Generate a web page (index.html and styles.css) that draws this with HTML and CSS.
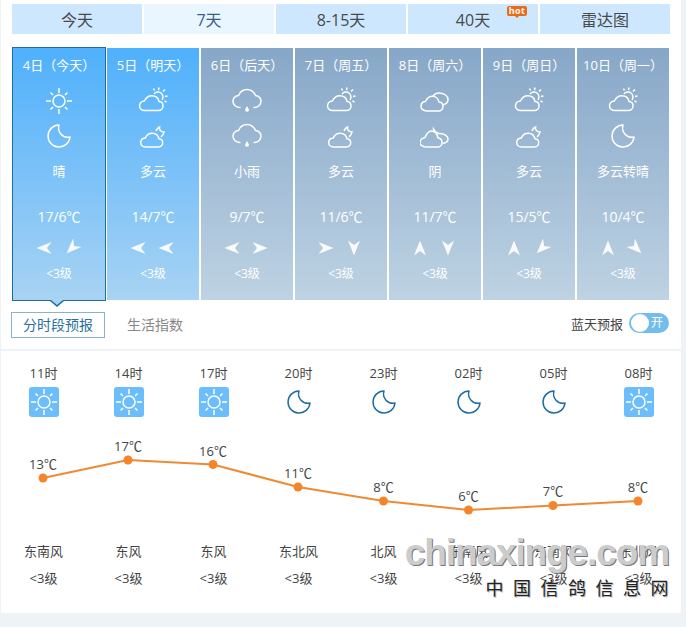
FILE: index.html
```html
<!DOCTYPE html>
<html lang="zh-CN">
<head>
  <meta charset="UTF-8">
  <title>7天天气预报</title>
  <link rel="stylesheet" href="styles.css">
</head>
<body>
  <svg class="icon-defs" width="0" height="0">
    <defs>
      <symbol id="sun" viewBox="0 0 30 30">
        <circle cx="15" cy="15" r="6"/>
        <path d="M15 2v5M15 23v5M2 15h5M23 15h5M6.500 6.500l2.500 2.500M21 21l2.500 2.500M6.500 23.500l2.500-2.500M21 9l2.500-2.500"/>
      </symbol>
      <symbol id="moon" viewBox="0 0 30 30">
        <path d="M15 4A11 11 0 1 0 26 16A9.400 9.400 0 0 1 15 4Z" stroke-linejoin="round"/>
      </symbol>
      <symbol id="cloud-sun" viewBox="0 0 30 30">
        <path d="M6.500 24.500h14c2.500 0 4.500-2 4.500-4.500 0-2.300-1.700-4.200-3.900-4.400-.8-3.400-3.800-5.800-7.200-5.800-3.300 0-6.200 2.300-7.500 5.200C3.500 15.200 1.500 17.500 1.500 20c0 2.500 2.300 4.500 5 4.500Z"/>
        <path d="M16 8A5 5 0 0 1 24 14"/>
        <path d="M21 1.500l-.5 2.500M27 3.500l-2 2M29.500 10l-2.500 .5M28.500 16l-2-1M15.500 2.500l1 2"/>
      </symbol>
      <symbol id="cloud-moon" viewBox="0 0 30 30">
        <path d="M7.500 26h13c2.300 0 4.200-1.900 4.200-4.200 0-2.200-1.600-3.900-3.700-4.100-.8-3.200-3.600-5.500-6.800-5.500-3.100 0-5.800 2.100-7 4.900C4.500 17.300 2.700 19.400 2.700 21.800c0 2.300 2.100 4.200 4.800 4.200Z"/>
        <path d="M18 10c.8-2 2.200-3.500 3.500-4-.5 2.500 1.300 5 4.500 5-.3 2-1.500 3.800-3 5"/>
      </symbol>
      <symbol id="rain" viewBox="0 0 30 30">
        <path d="M8.500 21.500C4 21.500 1 18.800 1 15.300 1 12 3.500 10 6.500 9.500 8 6 11 3.500 15 3.500S22 6 23.500 9.500C26.500 10 29 12 29 15.300 29 18.800 26 21.500 21.500 21.500"/>
        <path class="fill" d="M15 20l2 3.800a2 2 0 1 1-4 0Z"/>
      </symbol>
      <symbol id="overcast" viewBox="0 0 30 30">
        <path d="M6.500 25h12c2.500 0 4.500-2 4.500-4.500 0-2.300-1.700-4.200-3.900-4.400-.8-3.400-3.800-5.800-6.700-5.800-3.300 0-5.700 2.300-7 5.200C2.500 15.700 1 18 1 20.500c0 2.500 2.800 4.500 5.500 4.500Z"/>
        <path d="M13 10.300c1-1.800 3-3.300 6-3.300 4.500 0 9 2.500 9 6.500 0 3-2.300 4.800-5.500 5.500"/>
      </symbol>
      <symbol id="overcast-night" viewBox="0 0 30 30">
        <path d="M5.500 26h12c2.500 0 4.500-2 4.500-4.500 0-2.300-1.700-4.200-3.900-4.400-.8-3.900-3.300-7.100-6.700-7.100-3.300 0-5.200 3.600-6.500 6.500C2 17.200 0 19 0 21.500 0 24 2.800 26 5.500 26Z"/>
        <path d="M17.500 12.500c4.500-.5 10.500 1.500 10.500 5.500 0 2.500-2.300 4-5.500 4.500"/>
        <path class="fill" d="M13 5c.5 3 3 5.500 6 7-2.500 1-7.500-.5-6-7Z"/>
      </symbol>
      <symbol id="wind" viewBox="0 0 16 16">
        <path d="M.5 8 15.500 2 11 8 15.500 14Z"/>
      </symbol>
    </defs>
  </svg>

  <main class="panel">
    <nav class="tabs">
      <a class="tab">今天</a>
      <a class="tab tab-current">7天</a>
      <a class="tab">8-15天</a>
      <a class="tab">40天<span class="hot">hot</span></a>
      <a class="tab">雷达图</a>
    </nav>

    <ul class="days">
      <li class="day day-active">
        <h3>4日（今天）</h3>
        <svg class="wx"><use href="#sun"/></svg>
        <svg class="wx"><use href="#moon"/></svg>
        <p class="desc">晴</p>
        <p class="temp">17/6℃</p>
        <div class="winds"><svg style="transform:rotate(0deg)"><use href="#wind"/></svg><svg style="transform:rotate(-45deg)"><use href="#wind"/></svg></div>
        <p class="lvl">&lt;3级</p>
      </li>
      <li class="day day-near">
        <h3>5日（明天）</h3>
        <svg class="wx"><use href="#cloud-sun"/></svg>
        <svg class="wx"><use href="#cloud-moon"/></svg>
        <p class="desc">多云</p>
        <p class="temp">14/7℃</p>
        <div class="winds"><svg style="transform:rotate(0deg)"><use href="#wind"/></svg><svg style="transform:rotate(0deg)"><use href="#wind"/></svg></div>
        <p class="lvl">&lt;3级</p>
      </li>
      <li class="day">
        <h3>6日（后天）</h3>
        <svg class="wx"><use href="#rain"/></svg>
        <svg class="wx"><use href="#rain"/></svg>
        <p class="desc">小雨</p>
        <p class="temp">9/7℃</p>
        <div class="winds"><svg style="transform:rotate(0deg)"><use href="#wind"/></svg><svg style="transform:rotate(180deg)"><use href="#wind"/></svg></div>
        <p class="lvl">&lt;3级</p>
      </li>
      <li class="day">
        <h3>7日（周五）</h3>
        <svg class="wx"><use href="#cloud-sun"/></svg>
        <svg class="wx"><use href="#cloud-moon"/></svg>
        <p class="desc">多云</p>
        <p class="temp">11/6℃</p>
        <div class="winds"><svg style="transform:rotate(180deg)"><use href="#wind"/></svg><svg style="transform:rotate(-90deg)"><use href="#wind"/></svg></div>
        <p class="lvl">&lt;3级</p>
      </li>
      <li class="day">
        <h3>8日（周六）</h3>
        <svg class="wx"><use href="#overcast"/></svg>
        <svg class="wx"><use href="#overcast-night"/></svg>
        <p class="desc">阴</p>
        <p class="temp">11/7℃</p>
        <div class="winds"><svg style="transform:rotate(90deg)"><use href="#wind"/></svg><svg style="transform:rotate(-90deg)"><use href="#wind"/></svg></div>
        <p class="lvl">&lt;3级</p>
      </li>
      <li class="day">
        <h3>9日（周日）</h3>
        <svg class="wx"><use href="#cloud-sun"/></svg>
        <svg class="wx"><use href="#cloud-moon"/></svg>
        <p class="desc">多云</p>
        <p class="temp">15/5℃</p>
        <div class="winds"><svg style="transform:rotate(90deg)"><use href="#wind"/></svg><svg style="transform:rotate(-45deg)"><use href="#wind"/></svg></div>
        <p class="lvl">&lt;3级</p>
      </li>
      <li class="day">
        <h3>10日（周一）</h3>
        <svg class="wx"><use href="#cloud-sun"/></svg>
        <svg class="wx"><use href="#moon"/></svg>
        <p class="desc">多云转晴</p>
        <p class="temp">10/4℃</p>
        <div class="winds"><svg style="transform:rotate(90deg)"><use href="#wind"/></svg><svg style="transform:rotate(-135deg)"><use href="#wind"/></svg></div>
        <p class="lvl">&lt;3级</p>
      </li>
    </ul>

    <div class="subbar">
      <a class="subtab subtab-on">分时段预报</a>
      <a class="subtab">生活指数</a>
      <div class="bluesky">
        <span>蓝天预报</span>
        <span class="switch"><i></i>开</span>
      </div>
    </div>

    <section class="hours">
      <ol class="hour-row">
        <li><span>11时</span><svg class="hicon hicon-day"><use href="#sun"/></svg></li>
        <li><span>14时</span><svg class="hicon hicon-day"><use href="#sun"/></svg></li>
        <li><span>17时</span><svg class="hicon hicon-day"><use href="#sun"/></svg></li>
        <li><span>20时</span><svg class="hicon hicon-night"><use href="#moon"/></svg></li>
        <li><span>23时</span><svg class="hicon hicon-night"><use href="#moon"/></svg></li>
        <li><span>02时</span><svg class="hicon hicon-night"><use href="#moon"/></svg></li>
        <li><span>05时</span><svg class="hicon hicon-night"><use href="#moon"/></svg></li>
        <li><span>08时</span><svg class="hicon hicon-day"><use href="#sun"/></svg></li>
      </ol>

      <svg class="chart" viewBox="0 0 680 100" width="680" height="100">
        <polyline points="42,60 127,42 212,46.500 297,69 382.500,83 467.500,92 552,87.500 637,83"/>
        <g class="dots">
          <circle cx="42" cy="60" r="4.500"/><circle cx="127" cy="42" r="4.500"/><circle cx="212" cy="46.500" r="4.500"/><circle cx="297" cy="69" r="4.500"/>
          <circle cx="382.500" cy="83" r="4.500"/><circle cx="467.500" cy="92" r="4.500"/><circle cx="552" cy="87.500" r="4.500"/><circle cx="637" cy="83" r="4.500"/>
        </g>
        <g class="labels">
          <text x="42" y="51">13℃</text><text x="127" y="33">17℃</text><text x="212" y="38">16℃</text><text x="297" y="60">11℃</text>
          <text x="382.500" y="74">8℃</text><text x="467.500" y="83">6℃</text><text x="552" y="78">7℃</text><text x="637" y="74">8℃</text>
        </g>
      </svg>

      <ol class="wind-row">
        <li><span>东南风</span><span>&lt;3级</span></li>
        <li><span>东风</span><span>&lt;3级</span></li>
        <li><span>东风</span><span>&lt;3级</span></li>
        <li><span>东北风</span><span>&lt;3级</span></li>
        <li><span>北风</span><span>&lt;3级</span></li>
        <li><span>东南风</span><span>&lt;3级</span></li>
        <li><span>东南风</span><span>&lt;3级</span></li>
        <li><span>东北风</span><span>&lt;3级</span></li>
      </ol>
    </section>
  </main>

  <div class="watermark">
    <div class="wm-en">chinaxinge.com</div>
    <div class="wm-cn">中国信鸽信息网</div>
  </div>
</body>
</html>
```

FILE: styles.css
```css
html, body {
  margin: 0;
  padding: 0;
}

body {
  width: 686px;
  height: 627px;
  overflow: hidden;
  position: relative;
  background: #eef3f7;
  font-family: "Open Sans", "Noto Sans CJK SC", sans-serif;
  color: #444;
}

ul, ol, p, h3 {
  margin: 0;
  padding: 0;
  list-style: none;
  font-weight: normal;
}

.icon-defs {
  position: absolute;
}

.panel {
  width: 680px;
  height: 613px;
  margin-left: 1px;
  background: #fff;
}

/* top tabs */
.tabs {
  display: flex;
  gap: 2px;
  padding: 4px 0 0 11px;
}

.tab {
  position: relative;
  width: 130px;
  height: 30px;
  line-height: 32px;
  text-align: center;
  font-size: 16px;
  background: #cde8fe;
  color: #4a4a4a;
}

.tab-current {
  background: #e9f5ff;
  color: #3b5d8c;
}

.hot {
  position: absolute;
  top: 2px;
  right: 11px;
  width: 20px;
  height: 10px;
  line-height: 10px;
  border-radius: 2px;
  background: #ec6a16;
  color: #fff;
  font-size: 9px;
  font-weight: 700;
  letter-spacing: .3px;
}

.hot::after {
  content: "";
  position: absolute;
  left: 8px;
  top: 10px;
  border: 2px solid transparent;
  border-top-color: #ec6a16;
}

/* day cards */
.days {
  display: flex;
  gap: 2px;
  margin: 14px 0 0 12px;
}

.day {
  position: relative;
  width: 92px;
  height: 252px;
  text-align: center;
  color: #fff;
  background: linear-gradient(#87a7c8, #bed3e3);
}

.day-near {
  background: linear-gradient(#4fb0fc, #a8d3f3);
}

.day-active {
  background: linear-gradient(#4fb0fc, #a8d3f3);
  outline: 1px solid #1f6c9e;
}

.day-active::before {
  content: "";
  position: absolute;
  left: 37px;
  top: 253px;
  border: 7px solid transparent;
  border-top: 6px solid #1f6c9e;
  border-bottom: 0;
}

.day-active::after {
  content: "";
  position: absolute;
  left: 38px;
  top: 252px;
  border: 6px solid transparent;
  border-top: 5px solid #a8d3f3;
  border-bottom: 0;
}

.day h3 {
  height: 34px;
  line-height: 35px;
  font-size: 13px;
  white-space: nowrap;
}

.wx {
  display: block;
  width: 30px;
  height: 30px;
  margin: 4px auto 5px;
  fill: none;
  stroke: #fff;
  stroke-width: 1.500;
}

.fill {
  fill: #fff;
  stroke: none;
}

.desc {
  margin-top: 10px;
  height: 20px;
  line-height: 20px;
  font-size: 13px;
}

.temp {
  margin-top: 26px;
  height: 20px;
  line-height: 20px;
  font-size: 14px;
}

.winds {
  display: flex;
  justify-content: center;
  gap: 12px;
  margin: 13px 3px 0 0;
  height: 16px;
}

.winds svg {
  width: 16px;
  height: 16px;
  fill: #fff;
  opacity: .92;
}

.lvl {
  margin-top: 9px;
  font-size: 12px;
  line-height: 18px;
}

/* sub tabs */
.subbar {
  display: flex;
  align-items: flex-start;
  height: 49px;
  border-bottom: 2px solid #eef3f7;
  padding-left: 10px;
}

.subtab {
  width: 92px;
  height: 24px;
  line-height: 24px;
  margin: 12px 20px 0 0;
  text-align: center;
  font-size: 14px;
  color: #888;
}

.subtab + .subtab {
  width: 60px;
  margin-top: 13px;
}

.subtab-on {
  border: 1px solid #8cb2c9;
  color: #2a6f9c;
}

.bluesky {
  display: flex;
  align-items: center;
  gap: 6px;
  margin: 13px 12px 0 auto;
  font-size: 13px;
  color: #444;
}

.switch {
  position: relative;
  width: 40px;
  height: 20px;
  line-height: 20px;
  border-radius: 10px;
  background: #72bdea;
  color: #fff;
  font-size: 12px;
  text-align: right;
  padding-right: 6px;
  box-sizing: border-box;
}

.switch i {
  position: absolute;
  left: 2px;
  top: 1px;
  width: 18px;
  height: 18px;
  border-radius: 50%;
  background: #fff;
}

/* hourly forecast */
.hour-row, .wind-row {
  display: grid;
  grid-template-columns: repeat(8, 85px);
}

.hour-row li, .wind-row li {
  display: flex;
  flex-direction: column;
  align-items: center;
}

.hour-row {
  margin-top: 13px;
}

.hour-row span {
  height: 18px;
  line-height: 18px;
  font-size: 13px;
}

.hicon {
  width: 30px;
  height: 30px;
  margin-top: 5px;
  fill: none;
  stroke-width: 1.500;
}

.hicon-day {
  background: #6cbdfb;
  border-radius: 3px;
  stroke: #fff;
}

.hicon-night {
  stroke: #1f6c9e;
}

.chart {
  display: block;
  margin-top: 1px;
}

.chart polyline {
  fill: none;
  stroke: #ef8a33;
  stroke-width: 2;
}

.dots {
  fill: #f5852a;
}

.labels {
  fill: #444;
  font-size: 13px;
  text-anchor: middle;
}

.wind-row {
  margin-top: 20px;
}

.wind-row span {
  height: 27px;
  line-height: 27px;
  font-size: 13px;
  color: #444;
}

/* stamped over the screenshot */
.watermark {
  position: absolute;
  right: 17px;
  top: 530px;
  text-align: right;
  pointer-events: none;
}

.wm-en {
  font-family: "Liberation Sans", sans-serif;
  font-weight: 700;
  font-size: 37px;
  line-height: 46px;
  letter-spacing: -1.100px;
  color: #cccccc;
  text-shadow: 1px 1px 0 #777;
}

.wm-cn {
  font-family: "Noto Sans CJK SC", sans-serif;
  font-size: 18px;
  line-height: 22px;
  letter-spacing: 9.500px;
  margin-right: -9px;
  color: #222;
  text-shadow: 1px 1px 0 #bbb;
}
```
